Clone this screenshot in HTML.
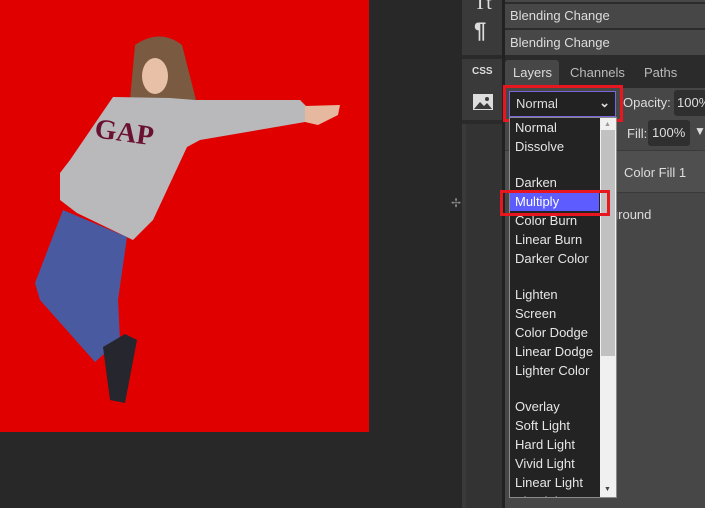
<!DOCTYPE html>
<html><head><style>
*{margin:0;padding:0;box-sizing:border-box}
body{width:705px;height:508px;overflow:hidden;background:#282828;font-family:"Liberation Sans",sans-serif;position:relative;font-size:13px;color:#ddd}
.a{position:absolute}
.dd div{height:19px;line-height:19px;padding-left:5px;color:#e6e6e6;white-space:nowrap}
.dd .s{height:17px}
</style></head><body>
<div class="a" style="left:0;top:0;width:369px;height:432px;background:#e10000"></div>
<svg class="a" style="left:0;top:0" width="369" height="432">
<path d="M135 45 Q160 28 182 45 L196 100 L130 100 Z" fill="#7a5a40"/>
<ellipse cx="155" cy="76" rx="13" ry="18" fill="#e8c0a8"/>
<path d="M113 97 L170 98 L195 100 L300 100 L306 106 L305 122 L200 140 L187 147 L153 220 L133 240 L77 213 L60 200 L60 173 L70 160 Z" fill="#b9b9bc"/>
<path d="M305 106 L340 105 L338 115 L318 125 L305 122Z" fill="#e6b8a0"/>
<text x="95" y="140" font-family="Liberation Serif" font-weight="bold" font-size="28" fill="#6a1030" transform="rotate(8 115 130)">GAP</text>
<path d="M63 210 L127 237 L118 300 L120 340 L95 362 L40 300 L35 283 Z" fill="#4a5aa0"/>
<path d="M103 347 L125 334 L137 340 L125 403 L110 400 Z" fill="#26262e"/>
</svg>
<div class="a" style="left:462px;top:0;width:40px;height:508px;background:#3a3a3a"></div>
<div class="a" style="left:462px;top:55px;width:40px;height:4px;background:#2a2a2a"></div>
<div class="a" style="left:462px;top:120px;width:40px;height:4px;background:#2a2a2a"></div>
<div class="a" style="left:466px;top:124px;width:36px;height:384px;background:#333"></div>
<div class="a" style="left:474px;top:-8px;font:20px 'Liberation Serif';color:#ddd">Tt</div>
<div class="a" style="left:474px;top:18px;font:bold 22px 'Liberation Sans';color:#ddd">¶</div>
<div class="a" style="left:472px;top:66px;font:bold 10px 'Liberation Sans';color:#ddd">CSS</div>
<svg class="a" style="left:473px;top:94px" width="20" height="16"><rect width="20" height="16" fill="#ddd"/><path d="M1 15 L7 8 L11 12 L14 9 L19 15Z" fill="#3a3a3a"/><circle cx="14" cy="5" r="2" fill="#3a3a3a"/></svg>
<div class="a" style="left:502px;top:0;width:3px;height:508px;background:#222"></div>
<div class="a" style="left:505px;top:0;width:200px;height:508px;background:#2b2b2b"></div>
<div class="a" style="left:505px;top:-2px;width:200px;height:4px;background:#474747"></div>
<div class="a" style="left:505px;top:4px;width:200px;height:24px;background:#474747;padding:4px 5px">Blending Change</div>
<div class="a" style="left:505px;top:30px;width:200px;height:25px;background:#474747;padding:5px 5px">Blending Change</div>
<div class="a" style="left:505px;top:60px;width:54px;height:30px;background:#474747;border-radius:3px 3px 0 0;padding:5px 8px">Layers</div>
<div class="a" style="left:570px;top:65px;color:#bbb">Channels</div>
<div class="a" style="left:644px;top:65px;color:#bbb">Paths</div>
<div class="a" style="left:505px;top:88px;width:200px;height:420px;background:#474747"></div>
<div class="a" style="left:503px;top:85px;width:120px;height:37px;border:3px solid #e8161e"></div>
<div class="a" style="left:509px;top:91px;width:107px;height:26px;background:#222;border:1px solid #7766dd;padding:4px 6px">Normal<span style="position:absolute;right:5px;top:3px;font-weight:bold">⌄</span></div>
<div class="a" style="left:623px;top:95px">Opacity:</div>
<div class="a" style="left:674px;top:90px;width:40px;height:26px;background:#2f2f2f;border-radius:3px;padding:5px 3px">100%</div>
<div class="a" style="left:627px;top:126px">Fill:</div>
<div class="a" style="left:648px;top:120px;width:42px;height:26px;background:#2f2f2f;border-radius:3px;padding:5px 4px">100%</div>
<div class="a" style="left:694px;top:124px;font-size:12px">▼</div>
<div class="a" style="left:505px;top:150px;width:200px;height:43px;background:#4f4f4f;border-top:1px solid #3a3a3a;border-bottom:1px solid #3a3a3a"></div>
<div class="a" style="left:624px;top:165px">Color Fill 1</div>
<div class="a" style="left:582px;top:207px">Background</div>
<div class="a dd" style="left:509px;top:117px;width:108px;height:381px;background:#232323;border:1px solid #8a8a8a;overflow:hidden">
<div>Normal</div><div>Dissolve</div><div class="s"></div><div>Darken</div>
<div style="background:#5c5cff;margin-right:17px;color:#fff">Multiply</div><div>Color Burn</div><div>Linear Burn</div><div>Darker Color</div><div class="s"></div>
<div>Lighten</div><div>Screen</div><div>Color Dodge</div><div>Linear Dodge</div><div>Lighter Color</div><div class="s"></div>
<div>Overlay</div><div>Soft Light</div><div>Hard Light</div><div>Vivid Light</div><div>Linear Light</div><div>Pin Light</div>
</div>
<div class="a" style="left:600px;top:118px;width:16px;height:379px;background:#f0f0f0"></div>
<div class="a" style="left:601px;top:130px;width:14px;height:226px;background:#c1c1c1"></div>
<div class="a" style="left:604px;top:121px;font-size:7px;color:#999">▲</div>
<div class="a" style="left:604px;top:486px;font-size:7px;color:#444">▼</div>
<div class="a" style="left:500px;top:190px;width:110px;height:26px;border:3px solid #e8161e"></div>
<div class="a" style="left:451px;top:196px;color:#888;font-size:12px">✢</div>
</body></html>
